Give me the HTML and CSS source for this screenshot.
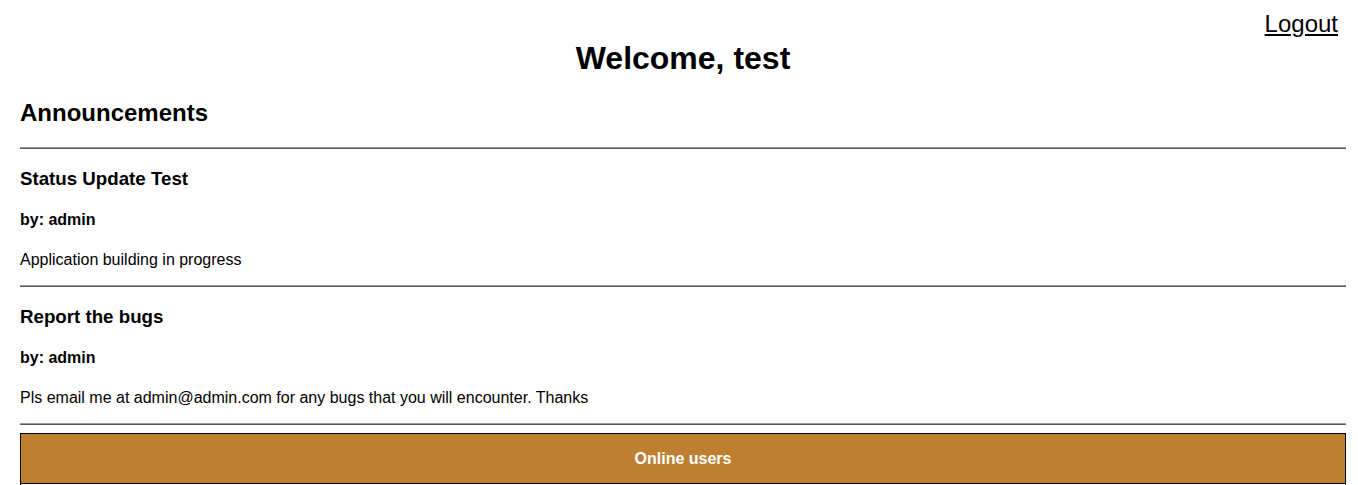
FILE: index.html
```html
<!DOCTYPE html>
<html>
<head>
<meta charset="utf-8">
<link rel="stylesheet" href="styles.css">
</head>
<body>
<div class="page">
  <div class="topbar"><a class="logout" href="#">Logout</a></div>
  <h1 class="welcome">Welcome, test</h1>
  <h2 class="section-title">Announcements</h2>
  <hr class="divider">
  <div class="announcement">
    <h3 class="ann-title">Status Update Test</h3>
    <h4 class="ann-author">by: admin</h4>
    <p class="ann-body">Application building in progress</p>
  </div>
  <hr class="divider">
  <div class="announcement">
    <h3 class="ann-title">Report the bugs</h3>
    <h4 class="ann-author">by: admin</h4>
    <p class="ann-body">Pls email me at admin@admin.com for any bugs that you will encounter. Thanks</p>
  </div>
  <hr class="divider">
  <div class="online">
    <div class="online-header">Online users</div>
    <div class="online-list"></div>
  </div>
</div>
</body>
</html>
```
FILE: styles.css
```css
html, body {
  margin: 0;
  padding: 0;
  background: #fff;
}
body {
  font-family: "Liberation Sans", Arial, sans-serif;
  color: #000;
}
.page {
  padding: 10px 12px 0 20px;
}
.topbar {
  text-align: right;
  padding-right: 8px;
}
.logout {
  font-size: 24px;
  color: #000;
  text-decoration: underline;
}
.welcome {
  font-size: 32px;
  text-align: center;
  margin: 2px 0 0 0;
}
.section-title {
  font-size: 24px;
  margin: 22px 0 20px 0;
}
.divider {
  margin: 8px 0;
  border: 0;
  border-top: 1px solid #9a9a9a;
  border-bottom: 1px solid #5a5a5a;
  height: 0;
}
.announcement {
  padding: 0;
}
.ann-title {
  font-size: 18.72px;
  margin: 19px 0 18.72px;
}
.ann-author {
  font-size: 16px;
  margin: 20.72px 0 22.28px;
}
.ann-body {
  font-size: 16px;
  margin: 0 0 16px;
}
.online {
  margin-top: 8.5px;
  border: 1px solid #000;
}
.online-header {
  color: #fff;
  font-weight: bold;
  font-size: 16px;
  text-align: center;
  padding: 15.3px 0;
  background: #bf7f30;
  border-bottom: 1px solid #000;
}
.online-list {
  min-height: 60px;
  background: #fffdf5;
}
```
